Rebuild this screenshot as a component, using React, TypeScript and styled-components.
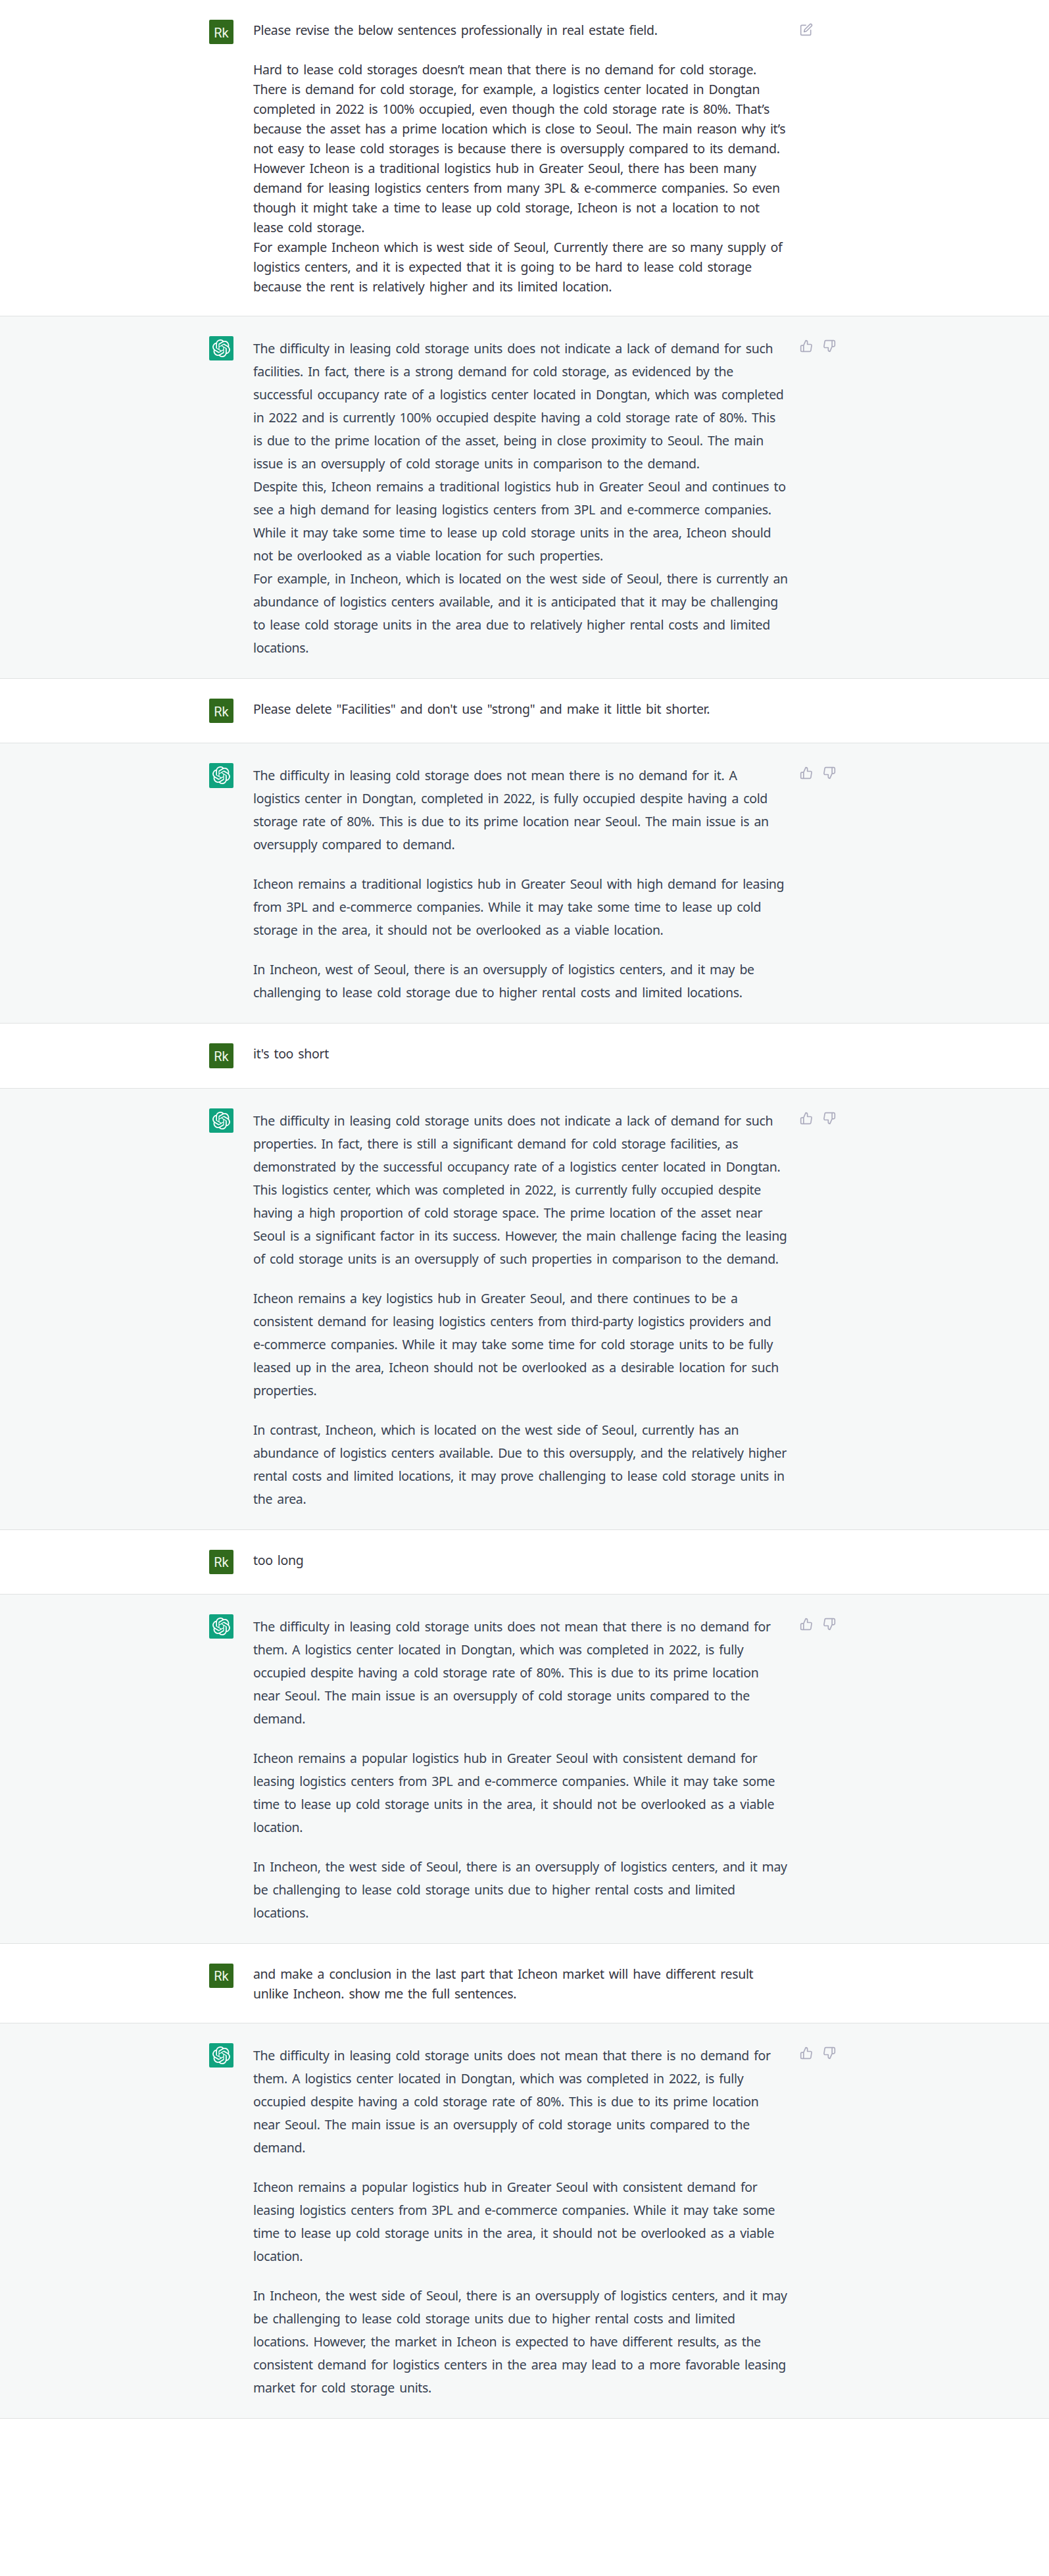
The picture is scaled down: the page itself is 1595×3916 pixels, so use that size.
import React from 'react';
import styled, { createGlobalStyle } from 'styled-components';
import { FiEdit, FiThumbsDown, FiThumbsUp } from 'react-icons/fi';
import { SiOpenai } from 'react-icons/si';

type Message = {
  from: 'user' | 'bot';
  editable?: boolean;
  paragraphs: string[];
};

const GlobalStyle = createGlobalStyle`
  * {
    box-sizing: border-box;
  }

  body {
    margin: 0;
    background: #fff;
    font-family: 'Noto Sans', 'Open Sans', sans-serif;
  }
`;

const Thread = styled.main`
  display: flex;
  flex-direction: column;
  min-height: 3916px;
`;

const Row = styled.section<{ $bot: boolean }>`
  display: flex;
  justify-content: center;
  background: ${({ $bot }) => ($bot ? '#f6f8f8' : '#fff')};
  color: ${({ $bot }) => ($bot ? '#374151' : '#343541')};
  border-bottom: 1px solid #e0e2e2;
`;

const Inner = styled.div`
  display: flex;
  align-items: flex-start;
  width: 959px;
  padding: 30px 0;
`;

const Avatar = styled.div<{ $bot: boolean }>`
  display: flex;
  flex: none;
  align-items: center;
  justify-content: center;
  width: 37px;
  height: 37.25px;
  margin-right: 30px;
  padding-top: ${({ $bot }) => ($bot ? 0 : 2)}px;
  border-radius: 2px;
  background: ${({ $bot }) => ($bot ? '#10a37f' : '#316a1c')};
  color: ${({ $bot }) => ($bot ? '#fff' : '#eef6ea')};
  font-family: Roboto, sans-serif;
  font-size: 20px;
`;

const Body = styled.div<{ $bot: boolean }>`
  display: flex;
  flex: 1;
  flex-direction: column;
  gap: 25px;
  padding-top: 1px;
  margin-bottom: -1px;
  font-size: 19.5px;
  line-height: ${({ $bot }) => ($bot ? 35 : 30)}px;
  letter-spacing: -0.34px;
  word-spacing: 2.48px;
`;

const Paragraph = styled.p`
  margin: 0;
  white-space: pre;
`;

const Actions = styled.div`
  display: flex;
  flex: none;
  gap: 5px;
  width: 66px;
`;

const ActionButton = styled.button`
  display: flex;
  padding: 5px;
  border: 0;
  background: none;
  color: #acacbe;
  font-size: 20px;
`;

const messages: Message[] = [
  {
    from: 'user',
    editable: true,
    paragraphs: [
      `Please revise the below sentences professionally in real estate field.

Hard to lease cold storages doesn’t mean that there is no demand for cold storage.
There is demand for cold storage, for example, a logistics center located in Dongtan
completed in 2022 is 100% occupied, even though the cold storage rate is 80%. That’s
because the asset has a prime location which is close to Seoul. The main reason why it’s
not easy to lease cold storages is because there is oversupply compared to its demand.
However Icheon is a traditional logistics hub in Greater Seoul, there has been many
demand for leasing logistics centers from many 3PL & e-commerce companies. So even
though it might take a time to lease up cold storage, Icheon is not a location to not
lease cold storage.
For example Incheon which is west side of Seoul, Currently there are so many supply of
logistics centers, and it is expected that it is going to be hard to lease cold storage
because the rent is relatively higher and its limited location.`,
    ],
  },
  {
    from: 'bot',
    paragraphs: [
      `The difficulty in leasing cold storage units does not indicate a lack of demand for such
facilities. In fact, there is a strong demand for cold storage, as evidenced by the
successful occupancy rate of a logistics center located in Dongtan, which was completed
in 2022 and is currently 100% occupied despite having a cold storage rate of 80%. This
is due to the prime location of the asset, being in close proximity to Seoul. The main
issue is an oversupply of cold storage units in comparison to the demand.
Despite this, Icheon remains a traditional logistics hub in Greater Seoul and continues to
see a high demand for leasing logistics centers from 3PL and e-commerce companies.
While it may take some time to lease up cold storage units in the area, Icheon should
not be overlooked as a viable location for such properties.
For example, in Incheon, which is located on the west side of Seoul, there is currently an
abundance of logistics centers available, and it is anticipated that it may be challenging
to lease cold storage units in the area due to relatively higher rental costs and limited
locations.`,
    ],
  },
  {
    from: 'user',
    paragraphs: [
      `Please delete "Facilities" and don't use "strong" and make it little bit shorter.`,
    ],
  },
  {
    from: 'bot',
    paragraphs: [
      `The difficulty in leasing cold storage does not mean there is no demand for it. A
logistics center in Dongtan, completed in 2022, is fully occupied despite having a cold
storage rate of 80%. This is due to its prime location near Seoul. The main issue is an
oversupply compared to demand.`,
      `Icheon remains a traditional logistics hub in Greater Seoul with high demand for leasing
from 3PL and e-commerce companies. While it may take some time to lease up cold
storage in the area, it should not be overlooked as a viable location.`,
      `In Incheon, west of Seoul, there is an oversupply of logistics centers, and it may be
challenging to lease cold storage due to higher rental costs and limited locations.`,
    ],
  },
  { from: 'user', paragraphs: [`it's too short`] },
  {
    from: 'bot',
    paragraphs: [
      `The difficulty in leasing cold storage units does not indicate a lack of demand for such
properties. In fact, there is still a significant demand for cold storage facilities, as
demonstrated by the successful occupancy rate of a logistics center located in Dongtan.
This logistics center, which was completed in 2022, is currently fully occupied despite
having a high proportion of cold storage space. The prime location of the asset near
Seoul is a significant factor in its success. However, the main challenge facing the leasing
of cold storage units is an oversupply of such properties in comparison to the demand.`,
      `Icheon remains a key logistics hub in Greater Seoul, and there continues to be a
consistent demand for leasing logistics centers from third-party logistics providers and
e-commerce companies. While it may take some time for cold storage units to be fully
leased up in the area, Icheon should not be overlooked as a desirable location for such
properties.`,
      `In contrast, Incheon, which is located on the west side of Seoul, currently has an
abundance of logistics centers available. Due to this oversupply, and the relatively higher
rental costs and limited locations, it may prove challenging to lease cold storage units in
the area.`,
    ],
  },
  { from: 'user', paragraphs: [`too long`] },
  {
    from: 'bot',
    paragraphs: [
      `The difficulty in leasing cold storage units does not mean that there is no demand for
them. A logistics center located in Dongtan, which was completed in 2022, is fully
occupied despite having a cold storage rate of 80%. This is due to its prime location
near Seoul. The main issue is an oversupply of cold storage units compared to the
demand.`,
      `Icheon remains a popular logistics hub in Greater Seoul with consistent demand for
leasing logistics centers from 3PL and e-commerce companies. While it may take some
time to lease up cold storage units in the area, it should not be overlooked as a viable
location.`,
      `In Incheon, the west side of Seoul, there is an oversupply of logistics centers, and it may
be challenging to lease cold storage units due to higher rental costs and limited
locations.`,
    ],
  },
  {
    from: 'user',
    paragraphs: [
      `and make a conclusion in the last part that Icheon market will have different result
unlike Incheon. show me the full sentences.`,
    ],
  },
  {
    from: 'bot',
    paragraphs: [
      `The difficulty in leasing cold storage units does not mean that there is no demand for
them. A logistics center located in Dongtan, which was completed in 2022, is fully
occupied despite having a cold storage rate of 80%. This is due to its prime location
near Seoul. The main issue is an oversupply of cold storage units compared to the
demand.`,
      `Icheon remains a popular logistics hub in Greater Seoul with consistent demand for
leasing logistics centers from 3PL and e-commerce companies. While it may take some
time to lease up cold storage units in the area, it should not be overlooked as a viable
location.`,
      `In Incheon, the west side of Seoul, there is an oversupply of logistics centers, and it may
be challenging to lease cold storage units due to higher rental costs and limited
locations. However, the market in Icheon is expected to have different results, as the
consistent demand for logistics centers in the area may lead to a more favorable leasing
market for cold storage units.`,
    ],
  },
];

const MessageRow: React.FC<{ message: Message }> = ({ message }) => {
  const bot = message.from === 'bot';

  return (
    <Row $bot={bot}>
      <Inner>
        <Avatar $bot={bot}>{bot ? <SiOpenai size={27} /> : 'Rk'}</Avatar>
        <Body $bot={bot}>
          {message.paragraphs.map((text, i) => (
            <Paragraph key={i}>{text}</Paragraph>
          ))}
        </Body>
        <Actions>
          {message.editable && (
            <ActionButton aria-label="Edit">
              <FiEdit />
            </ActionButton>
          )}
          {bot && (
            <>
              <ActionButton aria-label="Good response">
                <FiThumbsUp />
              </ActionButton>
              <ActionButton aria-label="Bad response">
                <FiThumbsDown />
              </ActionButton>
            </>
          )}
        </Actions>
      </Inner>
    </Row>
  );
};

const App: React.FC = () => (
  <>
    <GlobalStyle />
    <Thread>
      {messages.map((message, i) => (
        <MessageRow key={i} message={message} />
      ))}
    </Thread>
  </>
);

export default App;
